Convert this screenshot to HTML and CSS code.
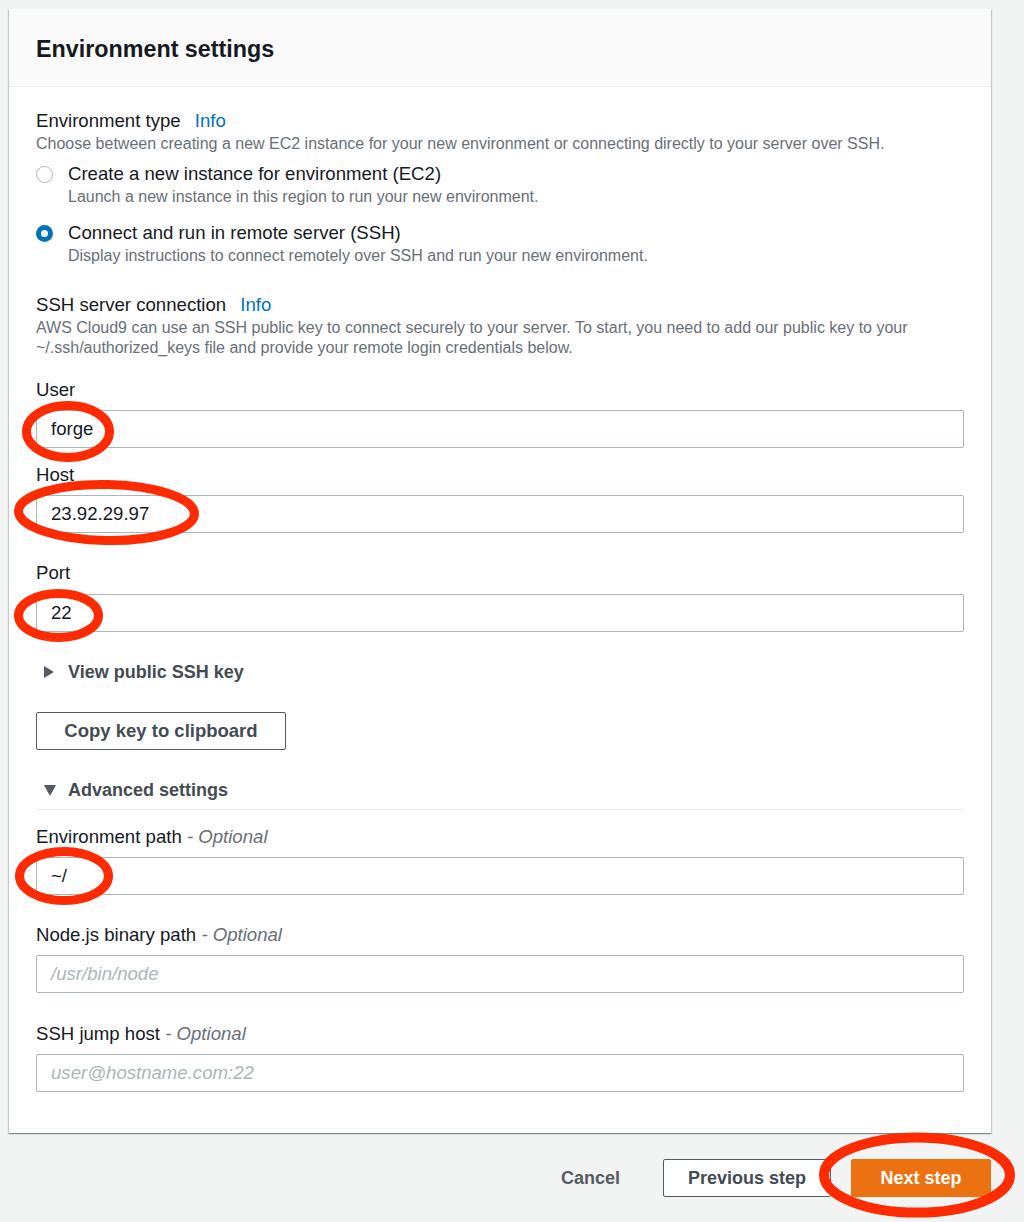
FILE: index.html
```html
<!DOCTYPE html>
<html lang="en">
<head>
<meta charset="utf-8">
<title>Environment settings</title>
<link rel="stylesheet" href="styles.css">
</head>
<body>
<div class="page">
  <section class="card">
    <header class="card-header">
      <h2 class="card-title">Environment settings</h2>
    </header>
    <div class="card-body">
      <div class="group">
        <div class="group-label">Environment type <a class="info">Info</a></div>
        <div class="desc">Choose between creating a new EC2 instance for your new environment or connecting directly to your server over SSH.</div>
      </div>

      <div class="radio-group">
        <label class="radio">
          <span class="radio-dot"></span>
          <span class="radio-text">
            <span class="radio-label">Create a new instance for environment (EC2)</span>
            <span class="desc">Launch a new instance in this region to run your new environment.</span>
          </span>
        </label>
        <label class="radio">
          <span class="radio-dot is-checked"></span>
          <span class="radio-text">
            <span class="radio-label">Connect and run in remote server (SSH)</span>
            <span class="desc">Display instructions to connect remotely over SSH and run your new environment.</span>
          </span>
        </label>
      </div>

      <div class="group group-ssh">
        <div class="group-label">SSH server connection <a class="info">Info</a></div>
        <div class="desc">AWS Cloud9 can use an SSH public key to connect securely to your server. To start, you need to add our public key to your ~/.ssh/authorized_keys file and provide your remote login credentials below.</div>
      </div>

      <div class="field field-user">
        <div class="field-label">User</div>
        <div class="input">forge</div>
      </div>
      <div class="field field-tight">
        <div class="field-label">Host</div>
        <div class="input">23.92.29.97</div>
      </div>
      <div class="field">
        <div class="field-label">Port</div>
        <div class="input input-low">22</div>
      </div>

      <div class="expander">
        <span class="tri tri-right"></span>
        <span class="expander-text">View public SSH key</span>
      </div>

      <button class="btn btn-outline btn-copy">Copy key to clipboard</button>

      <div class="expander expander-open">
        <span class="tri tri-down"></span>
        <span class="expander-text">Advanced settings</span>
      </div>

      <div class="field field-first">
        <div class="field-label">Environment path <span class="optional">- Optional</span></div>
        <div class="input">~/</div>
      </div>
      <div class="field">
        <div class="field-label">Node.js binary path <span class="optional">- Optional</span></div>
        <div class="input"><span class="placeholder">/usr/bin/node</span></div>
      </div>
      <div class="field field-last">
        <div class="field-label">SSH jump host <span class="optional">- Optional</span></div>
        <div class="input"><span class="placeholder">user@hostname.com:22</span></div>
      </div>
    </div>
  </section>

  <div class="footer">
    <button class="btn btn-link">Cancel</button>
    <button class="btn btn-outline">Previous step</button>
    <button class="btn btn-primary">Next step</button>
  </div>
</div>

<svg class="annotations" width="1024" height="1222" viewBox="0 0 1024 1222" aria-hidden="true">
  <g fill="none" stroke="#fe2a00">
    <ellipse cx="68" cy="431.5" rx="41.5" ry="26" stroke-width="9"/>
    <ellipse cx="106.5" cy="512.5" rx="88" ry="28" stroke-width="9" transform="rotate(1 106.5 512.5)"/>
    <ellipse cx="58.5" cy="615.5" rx="40" ry="22" stroke-width="9"/>
    <ellipse cx="64" cy="876" rx="44.5" ry="24.5" stroke-width="9"/>
    <ellipse cx="917" cy="1175" rx="93" ry="37.5" stroke-width="10"/>
  </g>
</svg>
</body>
</html>
```

FILE: styles.css
```css
html {
  background: #f2f3f3;
}

body {
  margin: 0;
  width: 1024px;
  height: 1222px;
  position: relative;
  overflow: hidden;
  font-family: "Liberation Sans", Arial, sans-serif;
  color: #16191f;
  background: #f2f3f3;
}

.page {
  padding: 9px 33px 0 9px;
}

.card {
  background: #ffffff;
  box-shadow: 0 1px 1px 0 rgba(0, 28, 36, 0.3), 1px 1px 1px 0 rgba(0, 28, 36, 0.15), -1px 1px 1px 0 rgba(0, 28, 36, 0.15);
}

.card-header {
  box-sizing: border-box;
  height: 78px;
  padding: 3px 27px 0;
  display: flex;
  align-items: center;
  background: #fafafa;
  border-bottom: 1px solid #eaeded;
}

.card-title {
  margin: 0;
  font-size: 23.3px;
  font-weight: 700;
  color: #16191f;
}

.card-body {
  padding: 22px 27px 41px;
}

.group-label,
.radio-label,
.field-label {
  font-size: 18.6px;
  line-height: 24px;
  color: #16191f;
}

.info {
  margin-left: 9px;
  color: #0073bb;
  text-decoration: none;
}

.desc {
  display: block;
  margin-top: 1px;
  font-size: 16px;
  line-height: 20px;
  color: #687078;
}

.radio-group {
  margin-top: 8px;
  display: flex;
  flex-direction: column;
  gap: 14px;
}

.radio {
  display: flex;
  gap: 15px;
  align-items: flex-start;
}

.radio-dot {
  box-sizing: border-box;
  flex: none;
  width: 17px;
  height: 17px;
  margin-top: 4px;
  border-radius: 50%;
  border: 1.5px solid #aab7b8;
  background: #fff;
}

.radio-dot.is-checked {
  border: 5.5px solid #0073bb;
  background: #fff;
}

.radio-text {
  display: flex;
  flex-direction: column;
}

.radio-label {
  display: block;
}

.group-ssh {
  margin-top: 27px;
}

.field {
  margin-top: 28px;
}

.field-user {
  margin-top: 20px;
}

.field-tight {
  margin-top: 15px;
}

.field-first {
  margin-top: 15px;
}

.field-last {
  margin-top: 29px;
}

.optional {
  font-style: italic;
  color: #687078;
}

.input {
  box-sizing: border-box;
  height: 38px;
  margin-top: 8px;
  padding: 0 14px;
  display: flex;
  align-items: center;
  border: 1px solid #aab7b8;
  border-radius: 2px;
  background: #fff;
  font-size: 18.6px;
  color: #16191f;
}

.input-low {
  margin-top: 9px;
}

.placeholder {
  font-style: italic;
  color: #aab7b8;
}

.expander {
  margin-top: 28px;
  height: 24px;
  display: flex;
  align-items: center;
}

.expander-open {
  padding-bottom: 7px;
  border-bottom: 1px solid #eaeded;
}

.tri {
  flex: none;
  width: 32px;
  display: flex;
  justify-content: flex-start;
}

.tri::before {
  content: "";
  margin-left: 8px;
  width: 0;
  height: 0;
}

.tri-right::before {
  border-top: 6px solid transparent;
  border-bottom: 6px solid transparent;
  border-left: 10px solid #545b64;
}

.tri-down::before {
  border-left: 6.5px solid transparent;
  border-right: 6.5px solid transparent;
  border-top: 11px solid #545b64;
}

.expander-text {
  font-size: 18px;
  font-weight: 700;
  color: #444b54;
}

.btn {
  box-sizing: border-box;
  height: 38px;
  padding: 0 27px;
  font-family: inherit;
  font-size: 18px;
  font-weight: 700;
  border-radius: 2px;
  border: 1px solid transparent;
  background: transparent;
  color: #545b64;
  cursor: pointer;
}

.btn-outline {
  border-color: #545b64;
  background: #fff;
  color: #444b54;
}

.btn-copy {
  display: block;
  margin-top: 28px;
  width: 250px;
  padding: 0;
  font-size: 18.5px;
}

.btn-primary {
  width: 140px;
  padding: 0;
  background: #ec7211;
  border-color: #ec7211;
  color: #fff;
}

.btn-link {
  padding: 0 22px;
  color: #545b64;
}

.footer {
  margin-top: 26px;
  display: flex;
  justify-content: flex-end;
  gap: 20px;
}

.footer .btn-outline {
  width: 168px;
  padding: 0;
}

.annotations {
  position: absolute;
  left: 0;
  top: 0;
  pointer-events: none;
}
```
